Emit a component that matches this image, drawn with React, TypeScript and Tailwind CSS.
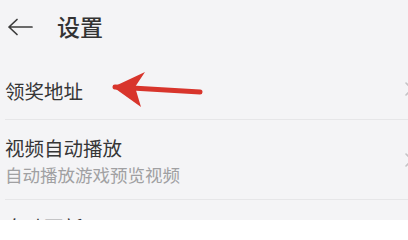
import React from "react";

const BackIcon = () => (
  <svg width="26" height="18" viewBox="0 0 26 18" fill="none">
    <path d="M10 1.5L2 9l8 7.5M2 9h23" stroke="#3c3c3c" strokeWidth="1.7" strokeLinecap="round" strokeLinejoin="round" />
  </svg>
);

const Chevron = () => (
  <svg width="10" height="16" viewBox="0 0 10 16" fill="none">
    <path d="M2 2l6 6-6 6" stroke="#c4c4c6" strokeWidth="1.6" strokeLinecap="round" strokeLinejoin="round" />
  </svg>
);

const RedArrow = () => (
  <svg width="96" height="40" viewBox="0 0 96 40" fill="none">
    <path d="M4 15L89 20" stroke="#d8352c" strokeWidth="5" strokeLinecap="round" />
    <path d="M2 15L34 0L24 15L30 35Z" fill="#d8352c" />
  </svg>
);

export default function App() {
  return (
    <div
      className="w-[408px] h-[220px] overflow-hidden bg-[#f4f4f6] text-[#363636]"
      style={{ fontFamily: '"Noto Sans CJK SC", "Noto Sans", sans-serif' }}
    >
      <div className="h-[52px] flex items-center pl-[7px] pt-[1px]">
        <BackIcon />
        <span className="ml-[24px] text-[23px] font-medium leading-none text-[#333]">设置</span>
      </div>
      <div className="relative h-[68px] ml-[5px] flex items-center justify-between border-b border-[#e6e6e8]">
        <span className="text-[19.5px] leading-none pt-[10px]">领奖地址</span>
        <div className="absolute left-[106px] top-[20px]">
          <RedArrow />
        </div>
        <div className="mr-[-6px] pt-[6px]">
          <Chevron />
        </div>
      </div>
      <div className="h-[80px] ml-[5px] flex items-center justify-between border-b border-[#e6e6e8]">
        <div className="flex flex-col pt-[2px]">
          <span className="text-[19.5px] leading-none">视频自动播放</span>
          <span className="mt-[9px] text-[17.5px] leading-none text-[#a0a0a2]">自动播放游戏预览视频</span>
        </div>
        <div className="mr-[-6px]">
          <Chevron />
        </div>
      </div>
      <div className="h-[40px] ml-[5px] pt-[16px]">
        <span className="text-[19.5px] leading-none">自动更新</span>
      </div>
    </div>
  );
}
